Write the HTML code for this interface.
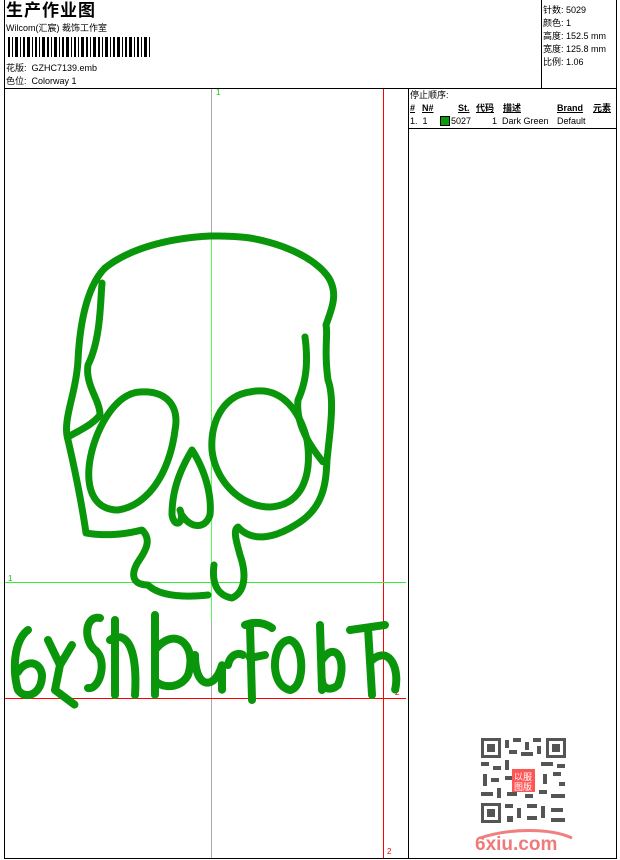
<!DOCTYPE html>
<html><head><meta charset="utf-8">
<style>
body{margin:0;width:620px;height:860px;background:#fff;position:relative;overflow:hidden;font-family:"Liberation Sans","WenQuanYi Zen Hei","Noto Sans CJK SC",sans-serif;color:#000}
.a{position:absolute}
.t{font-size:9px;white-space:nowrap;line-height:11px}
</style></head><body>
<div class="a" style="left:4px;top:0;width:1px;height:859px;background:#000"></div>
<div class="a" style="left:616px;top:0;width:1px;height:859px;background:#000"></div>
<div class="a" style="left:4px;top:858px;width:613px;height:1px;background:#000"></div>
<div class="a" style="left:4px;top:88px;width:613px;height:1px;background:#000"></div>
<div class="a" style="left:541px;top:0;width:1px;height:88px;background:#000"></div>
<div class="a" style="left:408px;top:88px;width:1px;height:771px;background:#000"></div>
<div class="a" style="left:408px;top:128px;width:209px;height:1px;background:#000"></div>

<div class="a" style="left:6px;top:1px;font-size:17px;font-weight:bold;line-height:20px;letter-spacing:1px">生产作业图</div>
<div class="a t" style="left:6px;top:23px">Wilcom(汇宸) 裁饰工作室</div>
<svg class="a" style="left:8px;top:37px" width="144" height="20">
<g fill="#000">
<rect x="0" y="0" width="2" height="20"/><rect x="4" y="0" width="1" height="20"/><rect x="7" y="0" width="3" height="20"/><rect x="12" y="0" width="1" height="20"/><rect x="15" y="0" width="2" height="20"/><rect x="19" y="0" width="3" height="20"/><rect x="24" y="0" width="1" height="20"/><rect x="27" y="0" width="2" height="20"/><rect x="31" y="0" width="1" height="20"/><rect x="34" y="0" width="3" height="20"/><rect x="39" y="0" width="2" height="20"/><rect x="43" y="0" width="1" height="20"/><rect x="46" y="0" width="3" height="20"/><rect x="51" y="0" width="1" height="20"/><rect x="54" y="0" width="2" height="20"/><rect x="58" y="0" width="3" height="20"/><rect x="63" y="0" width="1" height="20"/><rect x="66" y="0" width="2" height="20"/><rect x="70" y="0" width="1" height="20"/><rect x="73" y="0" width="3" height="20"/><rect x="78" y="0" width="2" height="20"/><rect x="82" y="0" width="1" height="20"/><rect x="85" y="0" width="3" height="20"/><rect x="90" y="0" width="2" height="20"/><rect x="94" y="0" width="1" height="20"/><rect x="97" y="0" width="3" height="20"/><rect x="102" y="0" width="1" height="20"/><rect x="105" y="0" width="2" height="20"/><rect x="109" y="0" width="3" height="20"/><rect x="114" y="0" width="1" height="20"/><rect x="117" y="0" width="2" height="20"/><rect x="121" y="0" width="3" height="20"/><rect x="126" y="0" width="1" height="20"/><rect x="129" y="0" width="2" height="20"/><rect x="133" y="0" width="1" height="20"/><rect x="136" y="0" width="3" height="20"/><rect x="141" y="0" width="1" height="20"/>
</g></svg>
<div class="a t" style="left:6px;top:63px">花版:&nbsp; GZHC7139.emb</div>
<div class="a t" style="left:6px;top:76px">色位:&nbsp; Colorway 1</div>

<div class="a t" style="left:543px;top:5px">针数: 5029</div>
<div class="a t" style="left:543px;top:18px">颜色: 1</div>
<div class="a t" style="left:543px;top:31px">高度: 152.5 mm</div>
<div class="a t" style="left:543px;top:44px">宽度: 125.8 mm</div>
<div class="a t" style="left:543px;top:57px">比例: 1.06</div>

<div class="a t" style="left:410px;top:90px">停止顺序:</div>
<div class="a t" style="left:410px;top:103px;font-weight:bold;text-decoration:underline">#</div>
<div class="a t" style="left:422px;top:103px;font-weight:bold;text-decoration:underline">N#</div>
<div class="a t" style="left:458px;top:103px;font-weight:bold;text-decoration:underline">St.</div>
<div class="a t" style="left:476px;top:103px;font-weight:bold;text-decoration:underline">代码</div>
<div class="a t" style="left:503px;top:103px;font-weight:bold;text-decoration:underline">描述</div>
<div class="a t" style="left:557px;top:103px;font-weight:bold;text-decoration:underline">Brand</div>
<div class="a t" style="left:593px;top:103px;font-weight:bold;text-decoration:underline">元素</div>
<div class="a t" style="left:410px;top:116px">1.&nbsp; 1</div>
<div class="a" style="left:440px;top:116px;width:8px;height:8px;background:#0a9a0a;border:1px solid #000"></div>
<div class="a t" style="left:451px;top:116px">5027</div>
<div class="a t" style="left:492px;top:116px">1&nbsp; Dark Green</div>
<div class="a t" style="left:557px;top:116px">Default</div>

<div class="a" style="left:211px;top:89px;width:1px;height:769px;background:#aaa"></div>
<div class="a" style="left:211px;top:240px;width:1px;height:380px;background:#5f5"></div>
<div class="a" style="left:383px;top:89px;width:1px;height:769px;background:#f00"></div>
<div class="a" style="left:5px;top:582px;width:401px;height:1px;background:#3e3"></div>
<div class="a" style="left:5px;top:698px;width:401px;height:1px;background:#f00"></div>
<div class="a" style="left:216px;top:88px;font-size:8px;color:#0c0">1</div>
<div class="a" style="left:8px;top:574px;font-size:8px;color:#0c0">1</div>
<div class="a" style="left:387px;top:847px;font-size:8px;color:#e00">2</div>
<div class="a" style="left:395px;top:688px;font-size:8px;color:#e00">2</div>

<svg class="a" style="left:0;top:0" width="408" height="860">
<g fill="none" stroke="#0a960a" stroke-width="7" stroke-dasharray="1.5 0.8" stroke-linejoin="round" stroke-linecap="round">
<path d="M210,236 C170,238 130,248 105,268 C88,285 80,320 78,360 C76,395 62,420 68,440 C75,470 82,505 86,533 C110,537 130,533 142,530 C152,540 146,550 138,562 C130,575 133,585 148,585 C158,595 180,598 208,595"/>
<path d="M214,565 C212,580 215,595 232,598 C245,592 247,575 240,555 C236,540 233,530 238,527 C250,540 270,542 300,522 C325,505 326,480 327,460 C330,430 335,400 328,380 C324,350 328,335 326,325 C333,305 337,295 330,280 C320,262 290,245 250,238 C235,236 220,236 210,236"/>
<path d="M102,283 C100,310 100,340 88,365 C85,385 100,400 100,415 C92,425 80,430 68,437"/>
<path d="M305,337 C308,360 307,380 298,400 C296,420 305,440 323,462"/>
<path d="M140,392 C165,390 180,405 175,430 C170,470 150,505 118,510 C95,510 85,490 90,460 C95,430 115,393 140,392Z"/>
<path d="M250,392 C280,385 300,410 307,440 C312,470 305,505 270,507 C240,507 215,480 212,450 C210,420 225,395 250,392Z"/>
<path d="M192,450 C180,470 172,490 172,515 C175,530 185,522 180,510 M192,450 C205,470 212,495 210,515 C205,530 190,528 182,515"/>
</g>
<g fill="none" stroke="#0a960a" stroke-width="8" stroke-dasharray="1.5 0.8" stroke-linejoin="round" stroke-linecap="round">
<path d="M28,630 C14,640 12,670 18,690 C25,700 42,695 42,675 C40,660 25,660 18,672"/>
<path d="M48,640 L60,665 L72,645 M60,665 L55,690 L75,705"/>
<path d="M100,618 C85,615 83,640 95,650 C108,660 100,690 88,688"/>
<path d="M115,620 L115,695 M110,640 C125,630 138,645 135,695"/>
<path d="M155,615 L155,695 M155,650 C175,625 198,645 188,675 C180,690 160,688 155,680"/>
<path d="M195,655 C195,690 215,690 222,665 L222,690 M228,665 C230,655 238,652 243,655"/>
<path d="M250,625 L252,700 M245,625 C258,620 268,625 272,628 M250,658 L265,655"/>
<path d="M290,640 C272,640 268,685 290,690 C305,688 305,645 290,640Z"/>
<path d="M320,625 L322,690 M322,660 C335,640 348,660 338,685 C330,692 322,688 322,680"/>
<path d="M350,630 L385,625 M368,628 L372,695 M372,660 C390,645 400,670 395,690"/>
</g>
</svg>

<svg class="a" style="left:481px;top:738px" width="85" height="85">
<g fill="#555">
<rect x="0" y="0" width="20" height="20"/><rect x="65" y="0" width="20" height="20"/><rect x="0" y="65" width="20" height="20"/>
</g>
<g fill="#fff"><rect x="3" y="3" width="14" height="14"/><rect x="68" y="3" width="14" height="14"/><rect x="3" y="68" width="14" height="14"/></g>
<g fill="#555"><rect x="6" y="6" width="8" height="8"/><rect x="71" y="6" width="8" height="8"/><rect x="6" y="71" width="8" height="8"/>
<rect x="24" y="2" width="4" height="8"/><rect x="32" y="0" width="8" height="4"/><rect x="44" y="4" width="4" height="8"/><rect x="52" y="0" width="8" height="4"/><rect x="28" y="12" width="8" height="4"/><rect x="40" y="14" width="12" height="4"/><rect x="56" y="8" width="4" height="8"/>
<rect x="0" y="24" width="8" height="4"/><rect x="12" y="28" width="8" height="4"/><rect x="24" y="22" width="4" height="10"/><rect x="60" y="24" width="12" height="4"/><rect x="76" y="26" width="8" height="4"/>
<rect x="2" y="36" width="4" height="12"/><rect x="10" y="40" width="8" height="4"/><rect x="24" y="38" width="8" height="4"/><rect x="62" y="36" width="4" height="10"/><rect x="72" y="34" width="8" height="4"/><rect x="78" y="44" width="6" height="4"/>
<rect x="0" y="54" width="12" height="4"/><rect x="16" y="50" width="4" height="10"/><rect x="26" y="54" width="10" height="4"/><rect x="44" y="56" width="8" height="4"/><rect x="58" y="52" width="8" height="4"/><rect x="70" y="56" width="14" height="4"/>
<rect x="24" y="66" width="8" height="4"/><rect x="36" y="70" width="4" height="10"/><rect x="46" y="66" width="10" height="4"/><rect x="60" y="68" width="4" height="12"/><rect x="70" y="70" width="12" height="4"/><rect x="26" y="78" width="6" height="6"/><rect x="46" y="78" width="10" height="4"/><rect x="70" y="80" width="14" height="4"/>
</g>
<rect x="31" y="31" width="23" height="23" fill="#f55"/>
<text x="33" y="42" font-size="9" fill="#fff" font-family="WenQuanYi Zen Hei,sans-serif">以服</text>
<text x="33" y="52" font-size="9" fill="#fff" font-family="WenQuanYi Zen Hei,sans-serif">图版</text>
</svg>
<svg class="a" style="left:470px;top:826px" width="110" height="28">
<path d="M10,12 C40,2 80,2 102,12" stroke="#f08080" stroke-width="3" fill="none"/>
<text x="5" y="24" font-size="19" font-weight="bold" fill="#f07a7a" font-family="Liberation Sans,sans-serif">6xiu.com</text>
</svg>
</body></html>
